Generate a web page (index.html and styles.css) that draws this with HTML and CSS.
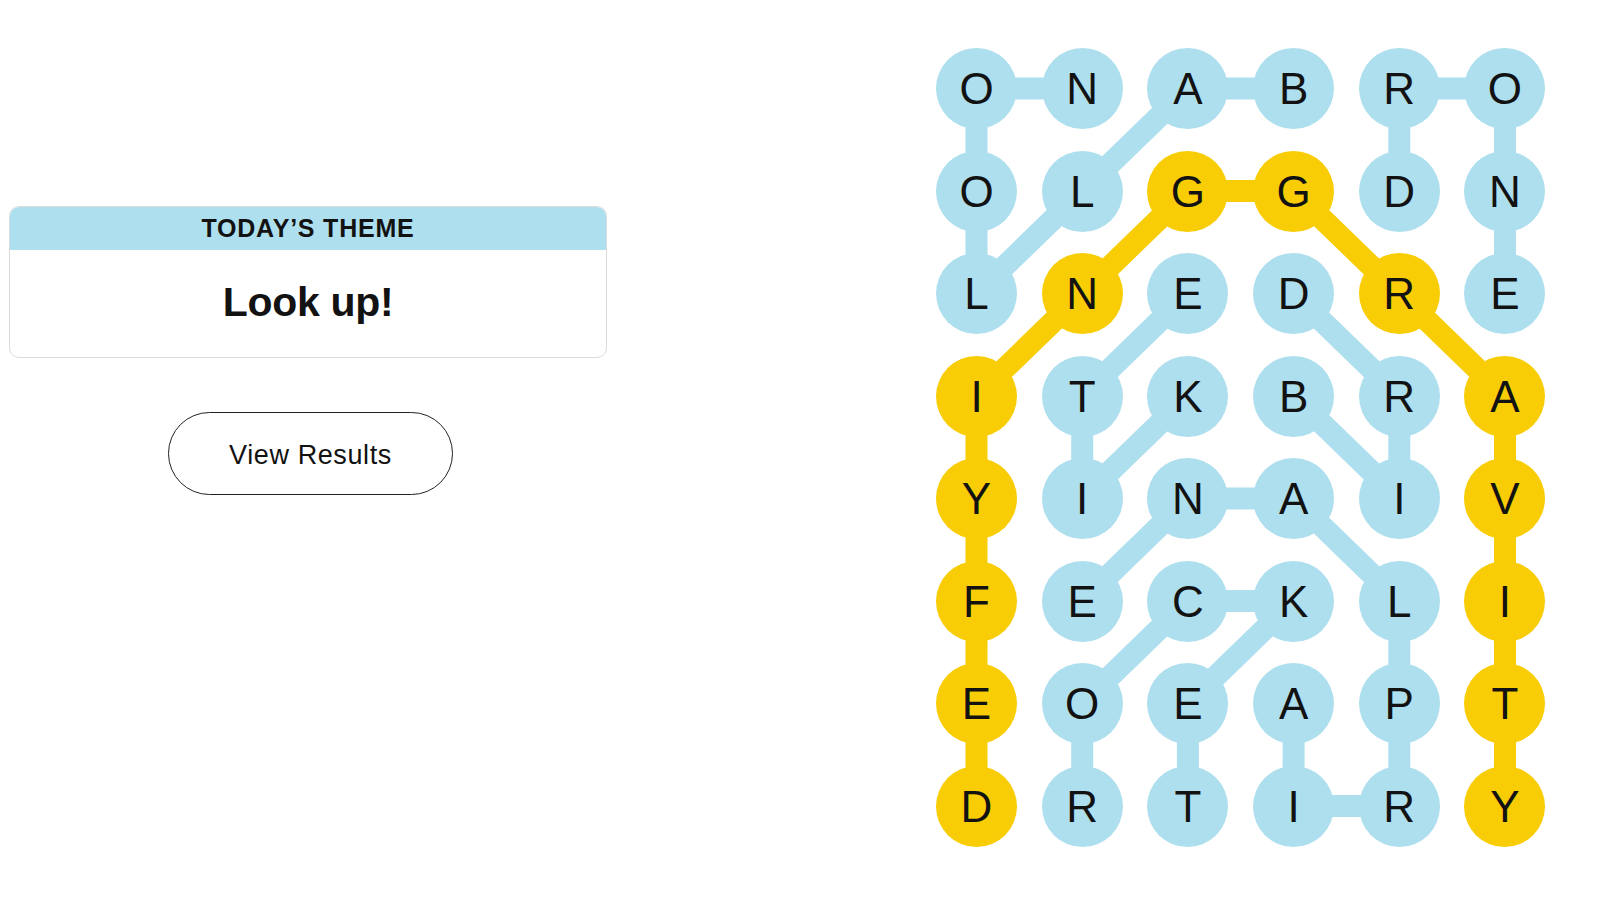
FILE: index.html
```html
<!DOCTYPE html>
<html lang="en">
<head>
<meta charset="utf-8">
<title>Strands</title>
<link rel="stylesheet" href="styles.css">
</head>
<body>
<main class="page">
  <section class="side">
    <div class="theme-card">
      <div class="theme-head">TODAY’S THEME</div>
      <div class="theme-body">Look up!</div>
    </div>
    <button class="results-btn" type="button">View Results</button>
  </section>

  <section class="board">
    <svg class="links" viewBox="0 0 609.5 798.5" width="609.5" height="798.5" aria-hidden="true">
      <g class="blue" fill="none" stroke="#aedfee" stroke-width="22" stroke-linecap="round" stroke-linejoin="round">
        <polyline points="357.6,40.5 251.9,40.5 146.2,143 40.5,245.5 40.5,143 40.5,40.5 146.2,40.5"/>
        <polyline points="463.3,143 463.3,40.5 569,40.5 569,143 569,245.5"/>
        <polyline points="251.9,348 146.2,450.5 146.2,348 251.9,245.5"/>
        <polyline points="357.6,348 463.3,450.5 463.3,348 357.6,245.5"/>
        <polyline points="357.6,655.5 357.6,758 463.3,758 463.3,655.5 463.3,553 357.6,450.5 251.9,450.5 146.2,553"/>
        <polyline points="146.2,758 146.2,655.5 251.9,553 357.6,553 251.9,655.5 251.9,758"/>
      </g>
      <g class="yellow" fill="none" stroke="#f8cd05" stroke-width="22" stroke-linecap="round" stroke-linejoin="round">
        <polyline points="40.5,758 40.5,655.5 40.5,553 40.5,450.5 40.5,348 146.2,245.5 251.9,143 357.6,143 463.3,245.5 569,348 569,450.5 569,553 569,655.5 569,758"/>
      </g>
    </svg>
    <div class="grid">
      <div class="cell">O</div><div class="cell">N</div><div class="cell">A</div><div class="cell">B</div><div class="cell">R</div><div class="cell">O</div>
      <div class="cell">O</div><div class="cell">L</div><div class="cell span">G</div><div class="cell span">G</div><div class="cell">D</div><div class="cell">N</div>
      <div class="cell">L</div><div class="cell span">N</div><div class="cell">E</div><div class="cell">D</div><div class="cell span">R</div><div class="cell">E</div>
      <div class="cell span">I</div><div class="cell">T</div><div class="cell">K</div><div class="cell">B</div><div class="cell">R</div><div class="cell span">A</div>
      <div class="cell span">Y</div><div class="cell">I</div><div class="cell">N</div><div class="cell">A</div><div class="cell">I</div><div class="cell span">V</div>
      <div class="cell span">F</div><div class="cell">E</div><div class="cell">C</div><div class="cell">K</div><div class="cell">L</div><div class="cell span">I</div>
      <div class="cell span">E</div><div class="cell">O</div><div class="cell">E</div><div class="cell">A</div><div class="cell">P</div><div class="cell span">T</div>
      <div class="cell span">D</div><div class="cell">R</div><div class="cell">T</div><div class="cell">I</div><div class="cell">R</div><div class="cell span">Y</div>
    </div>
  </section>
</main>
</body>
</html>
```
FILE: styles.css
```css
* { box-sizing: border-box; }

html, body {
  margin: 0;
  padding: 0;
  background: #ffffff;
  color: #121212;
  font-family: "Liberation Sans", Arial, sans-serif;
}

.page {
  display: flex;
  align-items: flex-start;
  width: 1600px;
  height: 900px;
}

.side {
  display: flex;
  flex-direction: column;
  align-items: center;
  width: 598px;
  margin-left: 9px;
  padding-top: 206px;
}

.theme-card {
  width: 598px;
  border: 1px solid #dcdcdc;
  border-radius: 10px;
  overflow: hidden;
  background: #fff;
}

.theme-head {
  height: 44px;
  margin: -1px -1px 0;
  background: #aedfee;
  display: flex;
  align-items: center;
  justify-content: center;
  font-size: 25px;
  font-weight: 700;
  letter-spacing: 0.8px;
  padding-top: 1px;
}

.theme-body {
  height: 107px;
  display: flex;
  align-items: center;
  justify-content: center;
  font-size: 41px;
  font-weight: 700;
  letter-spacing: -0.3px;
  padding-bottom: 2px;
}

.results-btn {
  margin-top: 54px;
  margin-left: 5px;
  width: 285px;
  height: 83px;
  border: 1.5px solid #222;
  border-radius: 42px;
  background: #fff;
  color: #121212;
  font-family: "Liberation Sans", Arial, sans-serif;
  font-size: 27px;
  letter-spacing: 0.6px;
  padding: 3px 0 0;
}

.board {
  position: relative;
  margin-left: 329px;
  margin-top: 48px;
  width: 609.5px;
  height: 798.5px;
}

.links {
  position: absolute;
  left: 0;
  top: 0;
  z-index: 0;
}

.grid {
  position: relative;
  z-index: 1;
  display: grid;
  grid-template-columns: repeat(6, 81px);
  grid-auto-rows: 81px;
  column-gap: 24.7px;
  row-gap: 21.5px;
}

.cell {
  width: 81px;
  height: 81px;
  border-radius: 50%;
  background: #aedfee;
  display: flex;
  align-items: center;
  justify-content: center;
  font-size: 44px;
  line-height: 1;
  color: #121212;
  padding-top: 1px;
}

.cell.span {
  background: #f8cd05;
}
```
